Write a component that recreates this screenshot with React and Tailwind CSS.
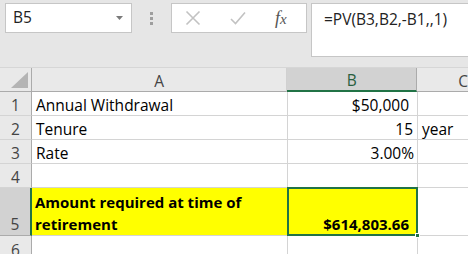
export default function App() {
  const grid = "border-[#d4d4d4]";
  return (
    <div className="w-[468px] h-[254px] overflow-hidden bg-white font-['Open_Sans',sans-serif] text-black">
      {/* toolbar */}
      <div className="h-[68px] bg-[#e6e6e6] flex items-start pt-[3px] pl-[5px] border-b border-[#d6d6d6]">
        <div className="w-[127px] h-[30px] bg-white border border-[#c6c6c6] flex items-center justify-between pl-[7px] pr-[8px]">
          <span className="text-[15.5px] text-[#222] leading-none">B5</span>
          <svg width="7" height="4" viewBox="0 0 7 4"><polygon points="0,0 7,0 3.5,4" fill="#7a7a7a" /></svg>
        </div>
        <div className="w-[39px] h-[30px] flex flex-col items-center justify-center gap-[2px]">
          <div className="w-[3px] h-[3px] bg-[#9e9e9e]" />
          <div className="w-[3px] h-[3px] bg-[#9e9e9e]" />
          <div className="w-[3px] h-[3px] bg-[#9e9e9e]" />
        </div>
        <div className="w-[136px] h-[30px] bg-white border border-[#c6c6c6] flex items-center">
          <svg className="ml-[13px]" width="16" height="16" viewBox="0 0 16 16"><path d="M1.5 1.5 L14.5 14.5 M14.5 1.5 L1.5 14.5" stroke="#c2c2c2" strokeWidth="1.6" fill="none" /></svg>
          <svg className="ml-[29px]" width="16" height="14" viewBox="0 0 16 14"><path d="M1 8 L5.5 12.5 L15 1.5" stroke="#c2c2c2" strokeWidth="1.6" fill="none" /></svg>
          <span className="ml-[29px] font-['Liberation_Serif',serif] italic text-[18px] text-[#555] leading-none">f<span className="text-[15px]">x</span></span>
        </div>
        <div className="ml-[4px] flex-1 h-[54px] bg-white border border-r-0 border-[#c6c6c6] pl-[12px] pt-[3px]">
          <span className="text-[15.5px] leading-[22px] text-[#222]">=PV(B3,B2,-B1,,1)</span>
        </div>
      </div>

      {/* column headers */}
      <div className="flex h-[24px] bg-[#e9e9e9] text-[#444] text-[15.5px]">
        <div className="w-[32px] h-full border-r border-b border-[#ababab] flex items-end justify-end pr-[3px] pb-[3px]">
          <svg width="17" height="16" viewBox="0 0 17 16"><polygon points="17,0 17,16 0,16" fill="#b4b4b4" /></svg>
        </div>
        <div className="w-[256px] h-full border-r border-b border-r-[#d0d0d0] border-b-[#ababab] flex items-end justify-center leading-[20px]">A</div>
        <div className="w-[130px] h-full bg-[#d2d2d2] border-r border-r-[#ababab] border-b-2 border-b-[#217346] flex items-end justify-center leading-[19px] text-[#2a6040]">B</div>
        <div className="flex-1 h-full border-b border-[#ababab] flex items-end leading-[20px] pl-[41px]">C</div>
      </div>

      {[
        ["1", "Annual Withdrawal", "$50,000", "", "pr-[8px]"],
        ["2", "Tenure", "15", "year", "pr-[4px]"],
        ["3", "Rate", "3.00%", "", "pr-[3px]"],
        ["4", "", "", "", "pr-[4px]"],
      ].map(([n, a, b, c, pr]) => (
        <div key={n} className="flex h-[24px] text-[15.5px] leading-[19px]">
          <div className="w-[32px] h-full bg-[#e9e9e9] border-r border-b border-r-[#ababab] border-b-[#d4d4d4] flex items-end justify-center text-[#444]">{n}</div>
          <div className={`w-[256px] h-full border-r border-b ${grid} flex items-end pl-[4px]`}>{a}</div>
          <div className={`w-[130px] h-full border-r border-b ${grid} flex items-end justify-end ${pr}`}>{b}</div>
          <div className={`flex-1 h-full border-b ${grid} flex items-end pl-[4px]`}>{c}</div>
        </div>
      ))}

      {/* row 5 */}
      <div className="flex h-[48px] text-[15.5px] leading-[22px]">
        <div className="w-[32px] h-full bg-[#d2d2d2] border-r-2 border-r-[#217346] border-b border-b-[#ababab] flex items-end justify-center text-[#444]">5</div>
        <div className={`w-[256px] h-full bg-[#ffff00] border-r border-b ${grid} flex items-end pl-[3px] font-bold text-[15px]`}>
          <span>Amount required at time of retirement</span>
        </div>
        <div className="relative w-[130px] h-full bg-[#ffff00] border-r border-b border-[#d4d4d4] flex items-end justify-end pr-[8px] font-bold text-[15px]">
          <span>$614,803.66</span>
          <div className="absolute -left-px -top-px w-[131px] h-[49px] border-2 border-[#217346]" />
          <div className="absolute -right-[3px] -bottom-[3px] w-[5px] h-[5px] bg-[#217346] border border-white" />
        </div>
        <div className={`flex-1 h-full border-b ${grid}`} />
      </div>

      {/* row 6 */}
      <div className="flex h-[24px] text-[15.5px] leading-[19px]">
        <div className="w-[32px] h-full bg-[#e9e9e9] border-r border-r-[#ababab] flex items-end justify-center text-[#444]">6</div>
        <div className={`w-[256px] h-full border-r ${grid}`} />
        <div className={`w-[130px] h-full border-r ${grid}`} />
        <div className="flex-1 h-full" />
      </div>
    </div>
  );
}
